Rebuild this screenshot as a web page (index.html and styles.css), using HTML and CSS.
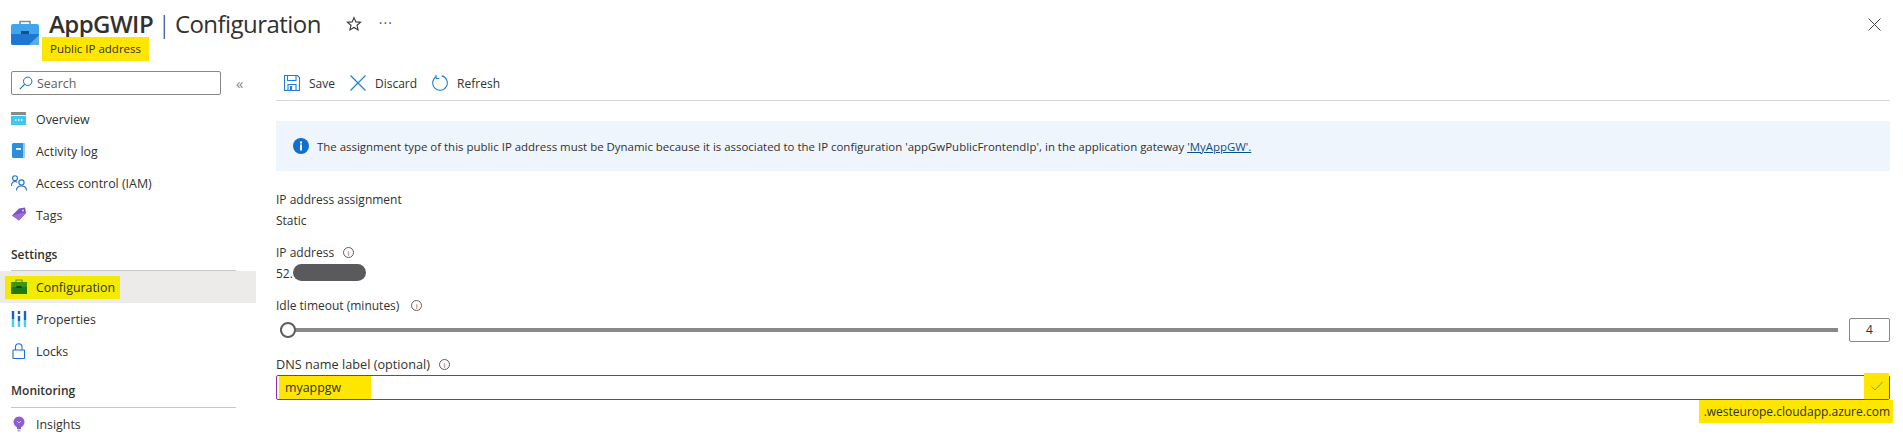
FILE: index.html
```html
<!DOCTYPE html>
<html lang="en">
<head>
<meta charset="utf-8">
<title>AppGWIP | Configuration</title>
<link rel="stylesheet" href="styles.css">
</head>
<body>
<div class="page">
  <header class="header">
    <svg class="res-icon" width="28" height="25" viewBox="0 0 28 25"><path d="M9 5V1.500h10V5" fill="none" stroke="#8a8a8a" stroke-width="1.600"/><path d="M0 6a2 2 0 0 1 2-2h24a2 2 0 0 1 2 2v17a2 2 0 0 1-2 2H2a2 2 0 0 1-2-2z" fill="#41a5ee"/><path d="M0 14h28v9a2 2 0 0 1-2 2H2a2 2 0 0 1-2-2z" fill="#1c78d0"/><path d="M18 25l10-10v8a2 2 0 0 1-2 2z" fill="#5aaee8"/><rect x="10" y="11" width="8" height="3" fill="#0f4f8f"/></svg>
    <div class="titles">
      <h1 class="title"><b>AppGWIP</b> <span class="sep">|</span> Configuration</h1>
      <div class="subtitle"><span class="hl-sub">Public IP address</span></div>
    </div>
    <svg class="star" width="16" height="16" viewBox="0 0 16 16"><path d="M8 1.600l1.900 4.300 4.600.4-3.500 3 1.100 4.600L8 11.500l-4.100 2.400L5 9.300l-3.500-3 4.600-.4z" fill="none" stroke="#323130" stroke-width="1.100"/></svg>
    <span class="dots">···</span>
    <svg class="close" width="13" height="13" viewBox="0 0 13 13"><path d="M.5.5l12 12M12.500.5l-12 12" stroke="#444" stroke-width="1" fill="none"/></svg>
  </header>
  <div class="body">
    <nav class="side">
      <div class="search-row">
        <div class="search">
          <svg width="14" height="14" viewBox="0 0 14 14"><circle cx="8.700" cy="5.300" r="4.200" fill="none" stroke="#0f6cbd" stroke-width="1"/><path d="M5.600 8.400L.8 13.200" stroke="#0f6cbd" stroke-width="1.100"/></svg>
          <span>Search</span>
        </div>
        <span class="collapse">«</span>
      </div>
      <a class="item"><svg width="16" height="16" viewBox="0 0 16 16"><rect y="1" width="15" height="13" fill="#3cc8f0"/><rect y="1" width="15" height="3" fill="#8a8a8a"/><rect y="4" width="15" height="1" fill="#e8f8fd"/><path d="M4 9h1.500M7 9h1.500M10 9h1.500" stroke="#fff" stroke-width="1.500"/></svg><span>Overview</span></a>
      <a class="item"><svg width="16" height="16" viewBox="0 0 16 16"><rect x="1" y="0" width="13" height="15" rx="1.500" fill="#2b8fdc"/><rect x="12" y="0" width="2" height="15" fill="#9ccdf0"/><rect x="5" y="5" width="5" height="1.800" fill="#fff"/></svg><span>Activity log</span></a>
      <a class="item"><svg width="16" height="16" viewBox="0 0 16 16"><g fill="none" stroke="#1f6fd0" stroke-width="1.100"><circle cx="4" cy="3.200" r="2.400"/><path d="M.5 11c0-3 1.500-4.500 3.500-4.500 1 0 1.700.3 2.300.8"/><circle cx="10.500" cy="7.500" r="2.600"/><path d="M5.500 15.500c0-2.800 2-4.500 5-4.500s5 1.700 5 4.500"/></g></svg><span>Access control (IAM)</span></a>
      <a class="item"><svg width="16" height="16" viewBox="0 0 16 16"><path d="M1 8.500L8 1.500l6-1 1 5.500-7 7.500z" fill="#7d4fc4"/><path d="M1 8.500l7 5 7-7.500-4 0z" fill="#9a6fdc"/><circle cx="12" cy="3.500" r="1" fill="#e5d8f7"/></svg><span>Tags</span></a>
      <div class="group">Settings</div>
      <a class="item active"><span class="hl-cfg"><svg width="16" height="16" viewBox="0 0 16 16"><path d="M5 3V1h6v2" fill="none" stroke="#6f8a10" stroke-width="1.200"/><rect y="3" width="16" height="12" fill="#3f9410"/><rect y="8" width="16" height="7" fill="#1f7a10"/><rect x="5.500" y="7" width="5" height="2" fill="#0c4a0c"/></svg><span>Configuration</span></span></a>
      <a class="item"><svg width="16" height="16" viewBox="0 0 16 16"><path d="M2 0v8M8 0v3M8 5v5M14 0v9" stroke="#1565c0" stroke-width="2.400"/><path d="M2 8v8M8 10v6M14 9v7" stroke="#50c8f0" stroke-width="2.400"/></svg><span>Properties</span></a>
      <a class="item"><svg width="16" height="16" viewBox="0 0 16 16"><rect x="2" y="7" width="11.500" height="8.500" rx=".5" fill="none" stroke="#1f6fd0" stroke-width="1.100"/><path d="M4.500 7V4a3.200 3.200 0 0 1 6.500 0v3" fill="none" stroke="#1f6fd0" stroke-width="1.100"/></svg><span>Locks</span></a>
      <div class="group group-mon">Monitoring</div>
      <a class="item"><svg width="16" height="16" viewBox="0 0 16 16"><circle cx="8" cy="6" r="5.500" fill="#8a5fd6"/><rect x="6" y="11" width="4" height="2" fill="#8a5fd6"/><rect x="6.500" y="13.500" width="3" height="2" fill="#b0b0b0"/><path d="M6 5l2 2 2-2" fill="none" stroke="#d9c8f5" stroke-width=".9"/></svg><span>Insights</span></a>
    </nav>
    <main class="main">
      <div class="toolbar">
        <button class="tool"><svg width="16" height="16" viewBox="0 0 16 16"><g fill="none" stroke="#1f7fd4" stroke-width="1.100"><path d="M.5.5h13l2 2v13H.5z"/><path d="M3.500.5v5h8.500v-5"/><path d="M4 15.500v-6h8v6"/></g><rect x="6" y="11" width="2" height="4" fill="#1f7fd4"/></svg><span>Save</span></button>
        <button class="tool"><svg width="16" height="16" viewBox="0 0 16 16"><path d="M.5.5l15 15M15.500.5l-15 15" stroke="#1f7fd4" stroke-width="1.200" fill="none"/></svg><span>Discard</span></button>
        <button class="tool"><svg width="16" height="16" viewBox="0 0 16 16"><path d="M9.700.9A7.300 7.300 0 1 1 4.500 1.600" fill="none" stroke="#1f7fd4" stroke-width="1.100"/><path d="M4 0v3.500h3.400" fill="none" stroke="#1f7fd4" stroke-width="1"/></svg><span>Refresh</span></button>
      </div>
      <div class="info">
        <svg width="16" height="16" viewBox="0 0 16 16"><circle cx="8" cy="8" r="8" fill="#0f6fd0"/><rect x="7" y="6.500" width="2" height="6" fill="#fff"/><rect x="7" y="3.500" width="2" height="2" fill="#fff"/></svg>
        <span>The assignment type of this public IP address must be Dynamic because it is associated to the IP configuration 'appGwPublicFrontendIp', in the application gateway <a class="link">'MyAppGW'.</a></span>
      </div>
      <div class="field f-assign">
        <div class="label">IP address assignment</div>
        <div class="value">Static</div>
      </div>
      <div class="field f-ip">
        <div class="label">IP address <i class="tip">i</i></div>
        <div class="value ip">52.<span class="redact"></span></div>
      </div>
      <div class="field f-idle">
        <div class="label label-idle">Idle timeout (minutes) <i class="tip">i</i></div>
        <div class="slider-row">
          <div class="slider"><span class="thumb"></span></div>
          <div class="num">4</div>
        </div>
      </div>
      <div class="field f-dns">
        <div class="label label-dns">DNS name label (optional) <i class="tip">i</i></div>
        <div class="input">
          <span class="hl-input">myappgw</span>
          <span class="hl-check"><svg width="12" height="10" viewBox="0 0 12 10"><path d="M.5 5.500l3.500 3.500 7.500-8" fill="none" stroke="#6fae20" stroke-width="1"/></svg></span>
        </div>
        <div class="suffix"><span class="hl-suffix">.westeurope.cloudapp.azure.com</span></div>
      </div>
    </main>
  </div>
</div>
</body>
</html>
```
FILE: styles.css
```css
* { box-sizing: border-box; }
html, body { margin: 0; height: 100%; background: #fff; overflow: hidden; }
body { font-family: "Open Sans", "Noto Sans", sans-serif; font-size: 12px; color: #323130; }
.page { width: 1903px; height: 435px; overflow: hidden; }
.header { height: 65px; display: flex; align-items: flex-start; padding: 0 22px 0 11px; }
.res-icon { margin-top: 20px; flex: none; }
.titles { margin-left: 3px; }
.title { margin: 7px 0 0 7px; font-size: 24px; line-height: 33px; font-weight: 400; letter-spacing: -.55px; word-spacing: -1px; }
.title b { font-weight: 600; }
.sep { font-weight: 300; }
.subtitle { font-size: 11.5px; line-height: 24px; margin-top: -3px; }
.hl-sub { display: inline-block; background: #ffe600; padding: 0 8px; height: 24px; width: 107px; white-space: nowrap; }
.star { margin: 16px 0 0 25px; }
.dots { margin: 13px 0 0 17px; font-size: 14px; line-height: 20px; letter-spacing: 1px; color: #555; }
.close { margin: 18px 0 0 auto; }
.body { display: flex; }
.side { width: 256px; flex: none; font-size: 12.4px; }
.search-row { display: flex; align-items: center; height: 24px; margin: 6px 0 8px 11px; }
.search { width: 210px; height: 24px; border: 1px solid #8a8886; border-radius: 2px; display: flex; align-items: center; gap: 4px; padding-left: 7px; color: #605e5c; }
.collapse { margin-left: 15px; font-size: 15px; color: #8a8886; line-height: 20px; }
.item { display: flex; align-items: center; gap: 9px; height: 32px; padding-left: 11px; white-space: nowrap; }
.item svg { flex: none; }
.group { font-weight: 600; font-size: 12px; height: 35px; margin: 5px 0 0 11px; width: 225px; padding-top: 9px; line-height: 20px; border-bottom: 1px solid #c8c6c4; }
.group-mon { height: 36px; }
.active { background: #edebe9; padding-left: 5px; }
.hl-cfg { display: flex; align-items: center; gap: 9px; background: #f2ea00; height: 23px; padding: 0 6px; width: 115px; }
.main { flex: 1; padding: 5px 13px 0 20px; min-width: 0; }
.toolbar { height: 31px; border-bottom: 1px solid #d8d8d8; display: flex; align-items: flex-start; gap: 7px; }
.tool { display: flex; align-items: center; gap: 9px; border: 0; background: none; padding: 0 0 0 8px; font: inherit; color: inherit; height: 24px; margin-top: 1px; }
.info { margin-top: 20px; height: 50px; background: #eff5fd; display: flex; align-items: center; gap: 8px; padding-left: 17px; white-space: nowrap; font-size: 11.45px; }
.link { color: #0b4f8a; text-decoration: underline; }
.field { display: block; }
.f-assign { margin-top: 18px; }
.f-ip { margin-top: 11px; }
.f-idle { margin-top: 11px; }
.f-dns { margin-top: 12px; margin-bottom: -1px; }
.label { line-height: 21px; height: 21px; display: flex; align-items: center; gap: 9px; }
.label-idle { gap: 12px; }
.label-dns { font-size: 12.7px; height: 20px; }
.value { line-height: 21px; height: 21px; }
.tip { width: 11px; height: 11px; border: 1px solid #605e5c; border-radius: 50%; font-size: 8px; line-height: 9px; text-align: center; font-style: normal; color: #605e5c; }
.ip { display: flex; }
.redact { display: block; width: 73px; height: 17px; background: #5a5a5c; border-radius: 9px; margin-top: 1px; }
.slider-row { display: flex; align-items: center; height: 24px; margin-top: 2px; }
.slider { flex: 1; height: 4px; background: #8a8886; margin-left: 4px; position: relative; }
.thumb { position: absolute; left: 0; top: -6px; width: 16px; height: 16px; border: 2px solid #605e5c; border-radius: 50%; background: #fff; }
.num { width: 41px; height: 24px; margin-left: 11px; border: 1px solid #8a8886; border-radius: 2px; text-align: center; line-height: 22px; }
.input { height: 25px; border: 1px solid #8a2da8; border-radius: 2px; display: flex; justify-content: space-between; margin-top: 1px; }
.hl-input { background: #ffe600; width: 92px; padding-left: 6px; margin-left: 2px; line-height: 23px; font-size: 12.4px; }
.hl-check { background: #ffe600; width: 25px; margin: -3px 0 0; height: 26px; display: flex; align-items: center; justify-content: center; }
.suffix { display: flex; justify-content: flex-end; margin-right: -3px; }
.hl-suffix { background: #ffe600; height: 23px; line-height: 23px; width: 194px; padding: 0 3px; text-align: right; white-space: nowrap; }
```
